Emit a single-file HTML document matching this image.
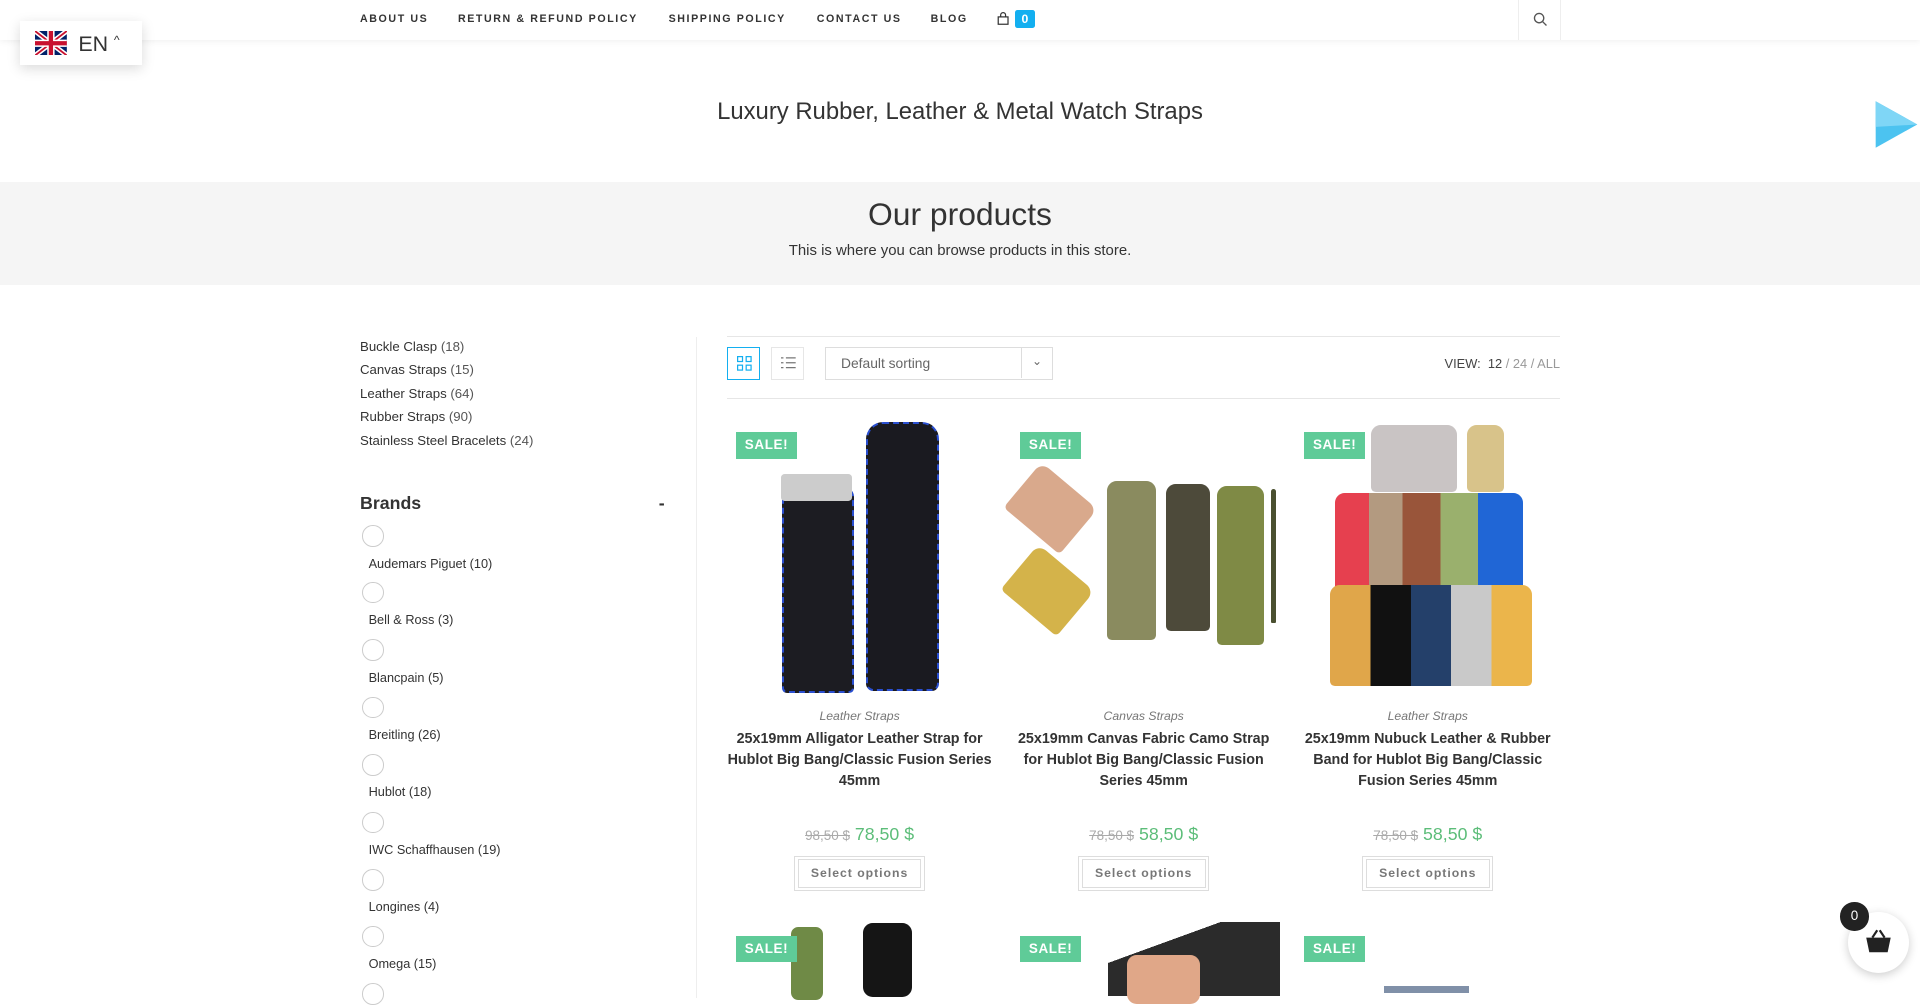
<!DOCTYPE html>
<html><head><meta charset="utf-8"><style>
html{zoom:1.22449}
body{margin:0;width:1568px;height:811px;overflow:hidden;background:#fff;font-family:"Liberation Sans",sans-serif;color:#333;position:relative}
.a{position:absolute}
.hdr{left:0;top:0;width:1568px;height:33px;background:#fff;box-shadow:0 1px 6px rgba(0,0,0,.08)}
.nav{top:11px;font-size:8.7px;font-weight:bold;letter-spacing:1.3px;color:#333;white-space:nowrap}
.badge{left:829px;top:8px;width:16px;height:15px;background:#13aff0;color:#fff;font-size:10px;font-weight:bold;text-align:center;line-height:15px;border-radius:2px}
.srch{left:1240px;top:0;width:33px;height:33px;border-left:1px solid #eee;border-right:1px solid #eee}
.lang{left:16px;top:17px;width:100px;height:36px;background:#fff;box-shadow:0 3px 10px rgba(0,0,0,.15)}
.band{left:0;top:149px;width:1568px;height:84px;background:#f5f5f5}
.cat{left:294px;font-size:10.8px;color:#333}
.cat span{color:#555}
.rad{left:296px;width:16px;height:16px;border:1px solid #ccc;border-radius:50%}
.bl{left:301px;font-size:10.4px;color:#333}
.sale{width:50px;height:22px;background:#5fcb98;color:#fff;font-size:11px;font-weight:bold;line-height:22px;text-align:center;letter-spacing:.5px}
.pc{width:216px;text-align:center}
.pcat{font-size:10px;font-style:italic;color:#777}
.pt{font-size:11.7px;font-weight:bold;line-height:17px;color:#333;margin-top:5px}
.pr{font-size:14.5px;color:#5cbd79}
.pr s{font-size:11px;color:#aaa}
.btn{display:inline-block;border:1px solid #ddd;padding:2px}
.btn div{border:1px solid #ddd;padding:5px 10px;font-size:10px;font-weight:bold;color:#777;letter-spacing:.8px}
.st{position:absolute;border-radius:8px 8px 4px 4px}
</style></head><body>
<div class="a hdr"></div>
<div class="a nav" style="left:294px">ABOUT US</div>
<div class="a nav" style="left:374px">RETURN &amp; REFUND POLICY</div>
<div class="a nav" style="left:546px">SHIPPING POLICY</div>
<div class="a nav" style="left:667px">CONTACT US</div>
<div class="a nav" style="left:760px">BLOG</div>
<svg class="a" style="left:814px;top:10px" width="10" height="11" viewBox="0 0 10 11"><rect x="1" y="4" width="8" height="6" fill="none" stroke="#333"/><path d="M3 4V2.5a2 2 0 0 1 4 0V4" fill="none" stroke="#333"/></svg>
<div class="a badge">0</div>
<div class="a srch"><svg style="position:absolute;left:11px;top:10px" width="12" height="12" viewBox="0 0 12 12"><circle cx="5" cy="5" r="3.8" fill="none" stroke="#555" stroke-width="1.1"/><path d="M8 8l3 3" stroke="#555" stroke-width="1.1"/></svg></div>
<div class="a lang">
<svg style="position:absolute;left:13px;top:8px" width="26" height="20" viewBox="0 0 26 20"><rect width="26" height="20" fill="#012169"/><path d="M0 0L26 20M26 0L0 20" stroke="#fff" stroke-width="4"/><path d="M0 0L26 20M26 0L0 20" stroke="#c8102e" stroke-width="1.5"/><path d="M13 0V20M0 10H26" stroke="#fff" stroke-width="6"/><path d="M13 0V20M0 10H26" stroke="#c8102e" stroke-width="3.5"/></svg>
<div style="position:absolute;left:48px;top:9px;font-size:17.5px;color:#333">EN</div>
<div style="position:absolute;left:77px;top:10px;font-size:10px;color:#333">^</div>
</div>
<div class="a" style="left:0;width:1568px;top:80px;text-align:center;font-size:19.5px;color:#333">Luxury Rubber, Leather &amp; Metal Watch Straps</div>
<svg class="a" style="left:1529px;top:82px" width="38" height="40" viewBox="0 0 38 40"><path d="M3 1L37 20L3 39Z" fill="#4cc3f0"/><path d="M3 1L37 20L3 22Z" fill="#7fd6f6"/></svg>
<div class="a band"></div>
<div class="a" style="left:0;width:1568px;top:160px;text-align:center;font-size:26px;color:#333">Our products</div>
<div class="a" style="left:0;width:1568px;top:198px;text-align:center;font-size:12.2px;color:#333">This is where you can browse products in this store.</div>

<div class="a cat" style="top:277px">Buckle Clasp <span>(18)</span></div>
<div class="a cat" style="top:296px">Canvas Straps <span>(15)</span></div>
<div class="a cat" style="top:315px">Leather Straps <span>(64)</span></div>
<div class="a cat" style="top:334px">Rubber Straps <span>(90)</span></div>
<div class="a cat" style="top:354px">Stainless Steel Bracelets <span>(24)</span></div>
<div class="a" style="left:294px;top:403px;font-size:14.5px;font-weight:bold;color:#333">Brands</div>
<div class="a" style="left:538px;top:403px;font-size:14.5px;font-weight:bold">-</div>
<div class="a rad" style="top:429px"></div><div class="a bl" style="top:454px">Audemars Piguet (10)</div>
<div class="a rad" style="top:475px"></div><div class="a bl" style="top:500px">Bell &amp; Ross (3)</div>
<div class="a rad" style="top:522px"></div><div class="a bl" style="top:547px">Blancpain (5)</div>
<div class="a rad" style="top:569px"></div><div class="a bl" style="top:594px">Breitling (26)</div>
<div class="a rad" style="top:616px"></div><div class="a bl" style="top:640px">Hublot (18)</div>
<div class="a rad" style="top:663px"></div><div class="a bl" style="top:688px">IWC Schaffhausen (19)</div>
<div class="a rad" style="top:710px"></div><div class="a bl" style="top:734px">Longines (4)</div>
<div class="a rad" style="top:756px"></div><div class="a bl" style="top:781px">Omega (15)</div>
<div class="a rad" style="top:803px"></div>
<div class="a" style="left:568px;top:275px;width:1px;height:540px;background:#eee"></div>

<div class="a" style="left:594px;top:274px;width:680px;height:1px;background:#e6e6e6"></div>
<div class="a" style="left:594px;top:325px;width:680px;height:1px;background:#e6e6e6"></div>
<div class="a" style="left:594px;top:283px;width:27px;height:27px;border:1px solid #13aff0;box-sizing:border-box"><svg style="position:absolute;left:7px;top:7px" width="12" height="12" viewBox="0 0 12 12" fill="none" stroke="#13aff0"><rect x=".5" y=".5" width="4" height="4"/><rect x="7.5" y=".5" width="4" height="4"/><rect x=".5" y="7.5" width="4" height="4"/><rect x="7.5" y="7.5" width="4" height="4"/></svg></div>
<div class="a" style="left:630px;top:283px;width:27px;height:27px;border:1px solid #e6e6e6;box-sizing:border-box"><svg style="position:absolute;left:7px;top:7px" width="12" height="11" viewBox="0 0 12 11" stroke="#777"><path d="M0 1.5h2M4 1.5h8M0 5.5h2M4 5.5h8M0 9.5h2M4 9.5h8"/></svg></div>
<div class="a" style="left:674px;top:283px;width:186px;height:27px;border:1px solid #ddd;box-sizing:border-box;font-size:11.3px;color:#666;line-height:25px;padding-left:12px">Default sorting<div style="position:absolute;left:159px;top:0;width:1px;height:25px;background:#ddd"></div><div style="position:absolute;left:168px;top:-1px;font-size:10px">&#8964;</div></div>
<div class="a" style="left:1150px;width:124px;top:291px;text-align:right;font-size:10.5px;color:#444">VIEW: &nbsp;12 <span style="color:#999">/ 24 / ALL</span></div>

<div class="a" style="left:594px;top:343px;width:216px;height:222px">
<div class="st" style="left:45px;top:55px;width:55px;height:165px;background:#1c1c22;border:2px dashed #2a4fd0"></div>
<div class="st" style="left:44px;top:44px;width:58px;height:22px;background:#ccc;border-radius:3px"></div>
<div class="st" style="left:113px;top:2px;width:57px;height:216px;background:#1a1a20;border:2px dashed #2a4fd0;border-radius:14px 14px 6px 6px"></div>
</div>
<div class="a" style="left:826px;top:343px;width:216px;height:222px">
<div class="st" style="left:2px;top:48px;width:60px;height:48px;background:#d9a98c;transform:rotate(40deg)"></div>
<div class="st" style="left:0px;top:115px;width:60px;height:48px;background:#d4b34a;transform:rotate(40deg)"></div>
<div class="st" style="left:78px;top:50px;width:40px;height:130px;background:#8a8b5f"></div>
<div class="st" style="left:126px;top:52px;width:36px;height:120px;background:#4d4a3a"></div>
<div class="st" style="left:168px;top:54px;width:38px;height:130px;background:#7f8a45"></div>
<div class="st" style="left:212px;top:56px;width:4px;height:110px;background:#4a5030"></div>
</div>
<div class="a" style="left:1058px;top:343px;width:216px;height:222px">
<div class="st" style="left:62px;top:4px;width:70px;height:55px;background:#c9c4c4"></div>
<div class="st" style="left:140px;top:4px;width:30px;height:55px;background:#d8c38a"></div>
<div class="st" style="left:32px;top:60px;width:154px;height:90px;background:linear-gradient(90deg,#e6404f 0 18%,#b39a80 18% 36%,#99553a 36% 56%,#9ab06d 56% 76%,#2066d6 76%)"></div>
<div class="st" style="left:28px;top:135px;width:165px;height:82px;background:linear-gradient(90deg,#e0a64a 0 20%,#111 20% 40%,#24406a 40% 60%,#c9c9c9 60% 80%,#ebb54b 80%)"></div>
</div>

<div class="a sale" style="left:601px;top:353px">SALE!</div>
<div class="a sale" style="left:833px;top:353px">SALE!</div>
<div class="a sale" style="left:1065px;top:353px">SALE!</div>

<div class="a pc" style="left:594px;top:579px"><div class="pcat">Leather Straps</div><div class="pt">25x19mm Alligator Leather Strap for Hublot Big Bang/Classic Fusion Series 45mm</div></div>
<div class="a pc" style="left:826px;top:579px"><div class="pcat">Canvas Straps</div><div class="pt">25x19mm Canvas Fabric Camo Strap for Hublot Big Bang/Classic Fusion Series 45mm</div></div>
<div class="a pc" style="left:1058px;top:579px"><div class="pcat">Leather Straps</div><div class="pt">25x19mm Nubuck Leather &amp; Rubber Band for Hublot Big Bang/Classic Fusion Series 45mm</div></div>

<div class="a pc pr" style="left:594px;top:673px"><s>98,50 $</s> 78,50 $</div>
<div class="a pc pr" style="left:826px;top:673px"><s>78,50 $</s> 58,50 $</div>
<div class="a pc pr" style="left:1058px;top:673px"><s>78,50 $</s> 58,50 $</div>
<div class="a pc" style="left:594px;top:699px"><div class="btn"><div>Select options</div></div></div>
<div class="a pc" style="left:826px;top:699px"><div class="btn"><div>Select options</div></div></div>
<div class="a pc" style="left:1058px;top:699px"><div class="btn"><div>Select options</div></div></div>

<div class="a" style="left:646px;top:757px;width:26px;height:60px;background:#6f8a46;border-radius:6px"></div>
<div class="a" style="left:705px;top:754px;width:40px;height:60px;background:#151515;border-radius:8px"></div>
<div class="a" style="left:905px;top:753px;width:140px;height:60px;background:linear-gradient(160deg,#fff 0 30%,#2b2b2b 30%)"></div>
<div class="a" style="left:920px;top:780px;width:60px;height:40px;background:#e0a788;border-radius:8px"></div>
<div class="a" style="left:1130px;top:805px;width:70px;height:6px;background:#8090a8"></div>
<div class="a sale" style="left:601px;top:764px">SALE!</div>
<div class="a sale" style="left:833px;top:764px">SALE!</div>
<div class="a sale" style="left:1065px;top:764px">SALE!</div>

<div class="a" style="left:1509px;top:745px;width:50px;height:50px;border-radius:50%;background:#fff;box-shadow:0 2px 8px rgba(0,0,0,.2)"><svg style="position:absolute;left:14px;top:14px" width="22" height="20" viewBox="0 0 22 20"><path d="M1 7h20l-2.5 12h-15z" fill="#222"/><path d="M6 7l4-6M16 7l-4-6" stroke="#222" stroke-width="1.8" fill="none"/></svg></div>
<div class="a" style="left:1503px;top:737px;width:23px;height:23px;border-radius:50%;background:#222;color:#fff;font-size:11px;text-align:center;line-height:23px">0</div>
</body></html>
